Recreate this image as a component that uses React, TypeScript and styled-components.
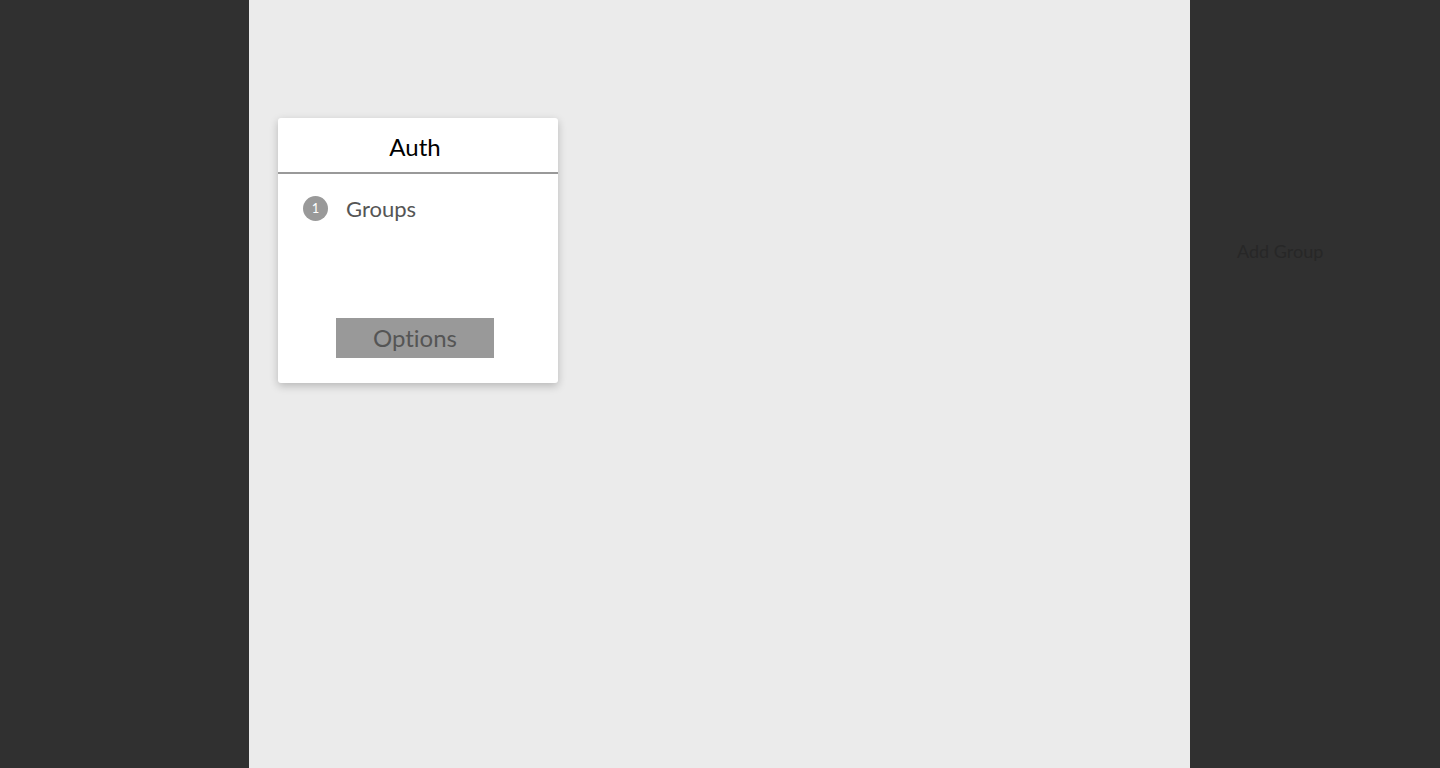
import React from "react";
import styled, { createGlobalStyle } from "styled-components";

const Global = createGlobalStyle`
  html, body { margin: 0; padding: 0; height: 100%; }
  body { font-family: Lato, "Open Sans", sans-serif; font-variant-ligatures: none; }
  #root { height: 100%; }
`;

const Layout = styled.div`
  display: grid;
  grid-template-columns: 249px 941px 250px;
  height: 768px;
  width: 1440px;
  overflow: hidden;
`;

const SidePanel = styled.div`
  background: #303030;
`;

const RightPanel = styled(SidePanel)`
  display: flex;
  justify-content: flex-start;
  align-items: flex-start;
  padding: 240px 0 0 47px;
  box-sizing: border-box;
`;

const AddGroup = styled.div`
  font-family: Lato, sans-serif;
  font-size: 18px;
  line-height: 22px;
  color: #272727;
`;

const Main = styled.main`
  background: #ebebeb;
  padding: 118px 29px;
  box-sizing: border-box;
`;

const Card = styled.section`
  width: 280px;
  height: 265px;
  background: #fff;
  border-radius: 3px;
  box-shadow: 0 3px 8px rgba(0, 0, 0, 0.22);
  display: flex;
  flex-direction: column;
  box-sizing: border-box;
`;

const CardHeader = styled.header`
  height: 56px;
  border-bottom: 2px solid #999;
  display: flex;
  align-items: center;
  justify-content: center;
  font-size: 24px;
  color: #000;
  padding-right: 6px;
  padding-top: 2px;
  box-sizing: border-box;
`;

const CardBody = styled.div`
  flex: 1;
  display: flex;
  flex-direction: column;
  padding: 21px 25px 25px;
`;

const Item = styled.div`
  display: flex;
  align-items: center;
  gap: 18px;
  height: 26px;
`;

const Badge = styled.span`
  width: 25px;
  height: 25px;
  border-radius: 50%;
  background: #999;
  color: #fff;
  font-size: 13px;
  font-weight: 400;
  display: flex;
  align-items: center;
  justify-content: center;
`;

const ItemLabel = styled.span`
  font-size: 22px;
  color: #555;
`;

const Footer = styled.div`
  margin-top: auto;
  display: flex;
  justify-content: center;
  padding-right: 6px;
`;

const OptionsButton = styled.button`
  width: 158px;
  height: 40px;
  border: none;
  background: #999;
  color: #555;
  font-family: Lato, sans-serif;
  font-size: 24px;
  font-variant-ligatures: none;
  line-height: 40px;
  padding: 0 0 2px;
  cursor: pointer;
`;

export default function App() {
  return (
    <>
      <Global />
      <Layout>
        <SidePanel />
        <Main>
          <Card>
            <CardHeader>Auth</CardHeader>
            <CardBody>
              <Item>
                <Badge>1</Badge>
                <ItemLabel>Groups</ItemLabel>
              </Item>
              <Footer>
                <OptionsButton>Options</OptionsButton>
              </Footer>
            </CardBody>
          </Card>
        </Main>
        <RightPanel>
          <AddGroup>Add Group</AddGroup>
        </RightPanel>
      </Layout>
    </>
  );
}
